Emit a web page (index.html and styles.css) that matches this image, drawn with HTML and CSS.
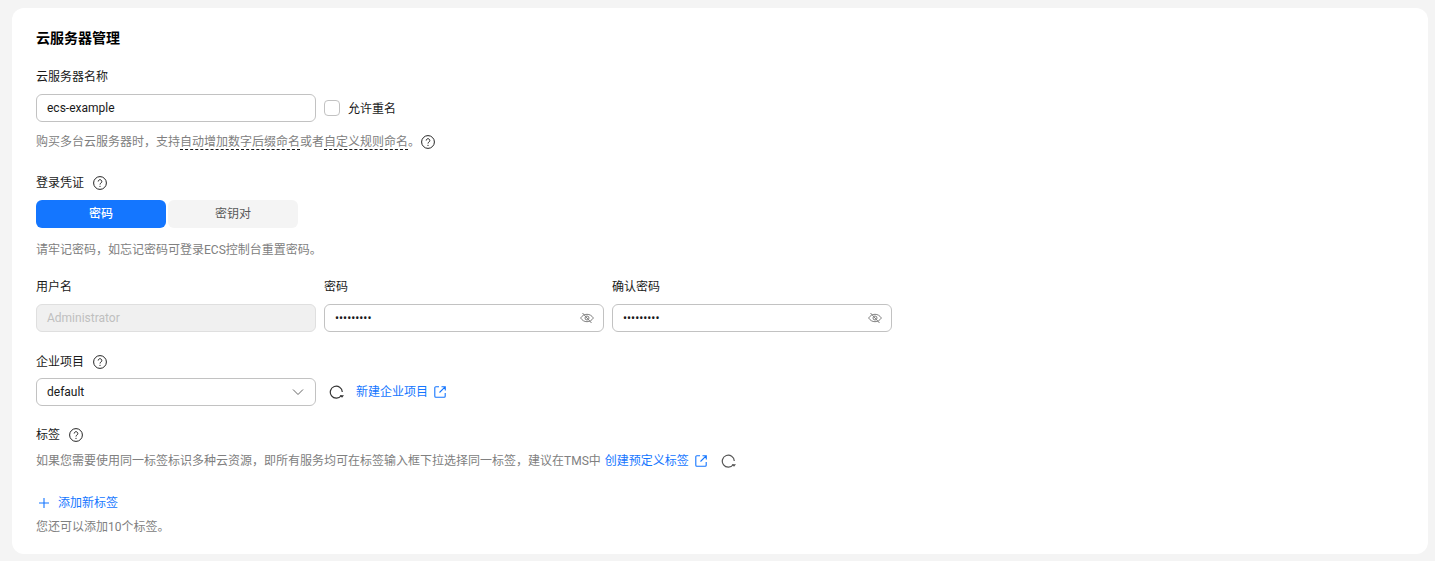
FILE: index.html
```html
<!DOCTYPE html>
<html lang="zh-CN">
<head>
<meta charset="utf-8">
<title>云服务器管理</title>
<link rel="stylesheet" href="styles.css">
</head>
<body>
<svg class="sprites" width="0" height="0">
  <symbol id="help" viewBox="0 0 14 14"><circle cx="7" cy="7" r="6.4" fill="none" stroke="currentColor" stroke-width="1"/><path d="M5.2 5.5a1.8 1.8 0 1 1 2.8 1.5c-.6.4-1 .7-1 1.5" fill="none" stroke="currentColor" stroke-width="1"/><circle cx="7" cy="10.3" r=".65" fill="currentColor"/></symbol>
  <symbol id="eye" viewBox="0 0 14 14"><path d="M.6 7C2.200 4.600 4.400 3.300 7 3.300s4.800 1.300 6.400 3.700c-1.600 2.400-3.800 3.700-6.400 3.700S2.200 9.400.6 7z" fill="none" stroke="currentColor"/><circle cx="7" cy="7" r="2" fill="none" stroke="currentColor"/><path d="M2.500 2l9 10" fill="none" stroke="currentColor"/></symbol>
  <symbol id="refresh" viewBox="0 0 15 15"><path d="M12.300 10.500A6 6 0 1 1 13.300 7" fill="none" stroke="currentColor" stroke-width="1.200"/><path d="M10.800 10.300h4.200l-2 2.500z" fill="currentColor"/></symbol>
  <symbol id="external" viewBox="0 0 12 12"><path d="M5 .8H1.800a1 1 0 0 0-1 1v8.400a1 1 0 0 0 1 1h8.400a1 1 0 0 0 1-1V7M7.500.7h3.800v3.800M11.100.9L5.500 6.500" fill="none" stroke="currentColor" stroke-width="1.100"/></symbol>
</svg>
<main class="card">
  <h2 class="title">云服务器管理</h2>

  <div class="label name-label">云服务器名称</div>
  <div class="row name-row">
    <div class="field w280"><span class="value">ecs-example</span></div>
    <span class="checkbox"></span>
    <span class="check-text">允许重名</span>
  </div>
  <p class="hint name-hint">购买多台云服务器时，支持<span class="dashed">自动增加数字后缀命名</span>或者<span class="dashed">自定义规则命名</span>。<svg class="help help-inline"><use href="#help"/></svg></p>

  <div class="label cred-label">登录凭证<svg class="help"><use href="#help"/></svg></div>
  <div class="toggle">
    <span class="tab tab-on">密码</span>
    <span class="tab tab-off">密钥对</span>
  </div>
  <p class="hint cred-hint">请牢记密码，如忘记密码可登录ECS控制台重置密码。</p>

  <div class="cred-grid">
    <div class="label">用户名</div>
    <div class="label">密码</div>
    <div class="label">确认密码</div>
    <div class="field disabled"><span class="value">Administrator</span></div>
    <div class="field field-eye"><span class="dots">•••••••••</span><svg class="eye"><use href="#eye"/></svg></div>
    <div class="field field-eye"><span class="dots">•••••••••</span><svg class="eye"><use href="#eye"/></svg></div>
  </div>

  <div class="label ent-label">企业项目<svg class="help"><use href="#help"/></svg></div>
  <div class="row ent-row">
    <div class="field w280"><span class="value">default</span>
      <svg class="chevron" viewBox="0 0 12 8"><path d="M1 1.500l5 5 5-5" fill="none" stroke="currentColor" stroke-width="1"/></svg>
    </div>
    <svg class="refresh"><use href="#refresh"/></svg>
    <a class="link ent-link">新建企业项目<svg class="external"><use href="#external"/></svg></a>
  </div>

  <div class="label tag-label">标签<svg class="help"><use href="#help"/></svg></div>
  <p class="hint tag-hint">如果您需要使用同一标签标识多种云资源，即所有服务均可在标签输入框下拉选择同一标签，建议在TMS中<a class="link tms-link">创建预定义标签<svg class="external"><use href="#external"/></svg></a><svg class="refresh tag-refresh"><use href="#refresh"/></svg></p>

  <a class="link add-link"><svg class="plus" viewBox="0 0 10 10"><path d="M5 0v10M0 5h10" fill="none" stroke="currentColor" stroke-width="1.100"/></svg>添加新标签</a>
  <p class="hint add-hint">您还可以添加10个标签。</p>
</main>
</body>
</html>
```
FILE: styles.css
```css
* { box-sizing: border-box; }
html, body { margin: 0; height: 561px; overflow: hidden; }
body {
  background: #f4f4f4;
  padding: 8px 7px 7px 12px;
  font: 12px/18px Roboto, "Noto Sans CJK SC", sans-serif;
  color: #191919;
}
.sprites { position: absolute; }
.card {
  background: #fff;
  border-radius: 12px;
  height: 546px;
  padding: 21px 24px 0;
}
.title { margin: 0; font-size: 14px; line-height: 18px; font-weight: 700; color: #000; }
.label { display: flex; align-items: center; height: 18px; }
.row { display: flex; align-items: center; }
.hint { margin: 0; display: flex; align-items: center; color: #808080; height: 18px; }
.name-label { margin-top: 21px; }
.name-row { margin-top: 8px; }
.name-hint { margin-top: 11px; }
.cred-label { margin-top: 23px; }
.toggle { display: flex; gap: 2px; margin-top: 8px; }
.tab { width: 130px; height: 28px; border-radius: 6px; display: flex; align-items: center; justify-content: center; }
.tab-on { background: #1476ff; color: #fff; font-weight: 500; }
.tab-off { background: #f4f4f4; color: #595959; }
.cred-hint { margin-top: 13px; }
.cred-grid { display: grid; grid-template-columns: repeat(3, 280px); column-gap: 8px; row-gap: 8px; margin-top: 19px; }
.field {
  height: 28px;
  border: 1px solid #c2c2c2;
  border-radius: 6px;
  padding: 0 10px;
  display: flex;
  align-items: center;
  justify-content: space-between;
  background: #fff;
}
.field-eye { padding-right: 9px; }
.w280 { width: 280px; }
.value { color: #191919; }
.disabled { background: #f0f0f0; border-color: #dfdfdf; }
.disabled .value { color: #bfbfbf; }
.dots { font-size: 12px; color: #191919; }
.eye { width: 14px; height: 14px; color: #808080; }
.checkbox { width: 16px; height: 16px; border: 1px solid #c2c2c2; border-radius: 4px; margin-left: 8px; }
.check-text { margin-left: 8px; color: #191919; position: relative; top: 1px; }
.dashed { border-bottom: 1px dashed #191919; height: 17px; align-self: flex-start; }
.help { width: 14px; height: 14px; margin-left: 9px; color: #252525; flex: none; }
.help-inline { margin-left: 1px; }
.ent-label { margin-top: 21px; }
.ent-row { margin-top: 7px; }
.chevron { width: 12px; height: 8px; color: #666; margin-right: 1px; }
.refresh { width: 15px; height: 15px; color: #333; flex: none; }
.ent-row .refresh { margin-left: 13px; }
.link { color: #1476ff; display: inline-flex; align-items: center; }
.external { width: 12px; height: 12px; margin-left: 6px; }
.ent-link { margin-left: 12px; }
.tag-label { margin-top: 20px; }
.tag-hint { margin-top: 8px; }
.tms-link { margin-left: 4px; }
.tag-refresh { margin-left: 14px; color: #555; }
.add-link { display: flex; margin-top: 24px; }
.plus { width: 10px; height: 10px; margin: 0 9px 0 3px; }
.add-hint { margin-top: 6px; }
```
